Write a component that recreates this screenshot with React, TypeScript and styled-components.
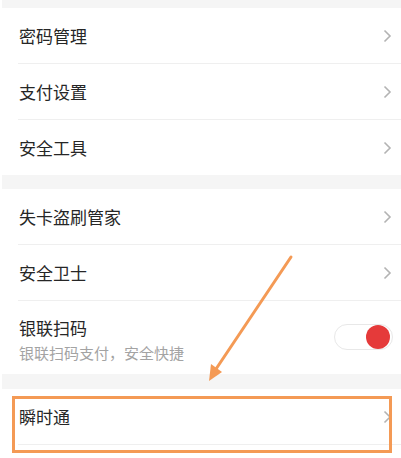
import styled, { createGlobalStyle } from "styled-components";

const GlobalStyle = createGlobalStyle`
  html, body {
    margin: 0;
    padding: 0;
    background: #fff;
  }
  body {
    font-family: "Noto Sans CJK SC", "Noto Sans", sans-serif;
  }
`;

const Page = styled.div`
  position: relative;
  width: 401px;
  height: 458px;
  overflow: hidden;
  background: #fff;
`;

const Gap = styled.div<{ h: number }>`
  height: ${(p) => p.h}px;
  margin-left: 2px;
  background: #f5f5f5;
`;

const Group = styled.div`
  background: #fff;
`;

const Row = styled.div<{ tall?: boolean; last?: boolean }>`
  position: relative;
  display: flex;
  align-items: center;
  justify-content: space-between;
  height: ${(p) => (p.tall ? 73 : 55)}px;
  margin-left: 18px;
  padding: 0 9px 0 1px;
  border-bottom: ${(p) => (p.last ? "none" : "1px solid #efefef")};
  box-sizing: content-box;
`;

const Texts = styled.div`
  display: flex;
  flex-direction: column;
  gap: 6px;
  margin-top: 4px;
`;

const Title = styled.div`
  font-size: 17px;
  line-height: 20px;
  color: #262626;
`;

const Sub = styled.div`
  font-size: 15px;
  line-height: 18px;
  color: #a3a3a3;
`;

const Track = styled.div`
  position: relative;
  width: 55px;
  height: 24px;
  border: 1px solid #e8e8e8;
  border-radius: 13px;
  background: #fff;
  display: flex;
  align-items: center;
  justify-content: flex-end;
  padding: 0 2px 0 0;
  margin-top: -2px;
  margin-right: -1px;
`;

const Knob = styled.div`
  width: 24px;
  height: 24px;
  border-radius: 50%;
  background: #e53a3a;
`;

const Highlight = styled.div`
  position: absolute;
  top: 7px;
  left: -6px;
  right: 9px;
  height: 51px;
  border: 3px solid #f49a55;
  pointer-events: none;
`;

const Overlay = styled.svg`
  position: absolute;
  left: 0;
  top: 0;
  pointer-events: none;
`;

const Chevron = () => (
  <svg width="9" height="14" viewBox="0 0 9 14">
    <polyline
      points="1.5,1.5 7,7 1.5,12.5"
      fill="none"
      stroke="#b3b3b3"
      strokeWidth="1.6"
    />
  </svg>
);

type Item = { label: string; last?: boolean };

const group1: Item[] = [
  { label: "密码管理" },
  { label: "支付设置" },
  { label: "安全工具", last: true },
];

const group2: Item[] = [{ label: "失卡盗刷管家" }, { label: "安全卫士" }];

export default function App() {
  return (
    <Page>
      <GlobalStyle />
      <Gap h={8} />
      <Group>
        {group1.map((it) => (
          <Row key={it.label} last={it.last}>
            <Title>{it.label}</Title>
            <Chevron />
          </Row>
        ))}
      </Group>
      <Gap h={14} />
      <Group>
        {group2.map((it) => (
          <Row key={it.label}>
            <Title>{it.label}</Title>
            <Chevron />
          </Row>
        ))}
        <Row tall last>
          <Texts>
            <Title>银联扫码</Title>
            <Sub>银联扫码支付，安全快捷</Sub>
          </Texts>
          <Track>
            <Knob />
          </Track>
        </Row>
      </Group>
      <Gap h={15} />
      <Group>
        <Row>
          <Title>瞬时通</Title>
          <Chevron />
          <Highlight />
        </Row>
      </Group>
      <Overlay width="401" height="458" viewBox="0 0 401 458">
        <line
          x1="291"
          y1="257"
          x2="216"
          y2="369"
          stroke="#f49a55"
          strokeWidth="3"
          strokeLinecap="round"
        />
        <polygon points="209,381 222,372 211,364" fill="#f49a55" />
      </Overlay>
    </Page>
  );
}
